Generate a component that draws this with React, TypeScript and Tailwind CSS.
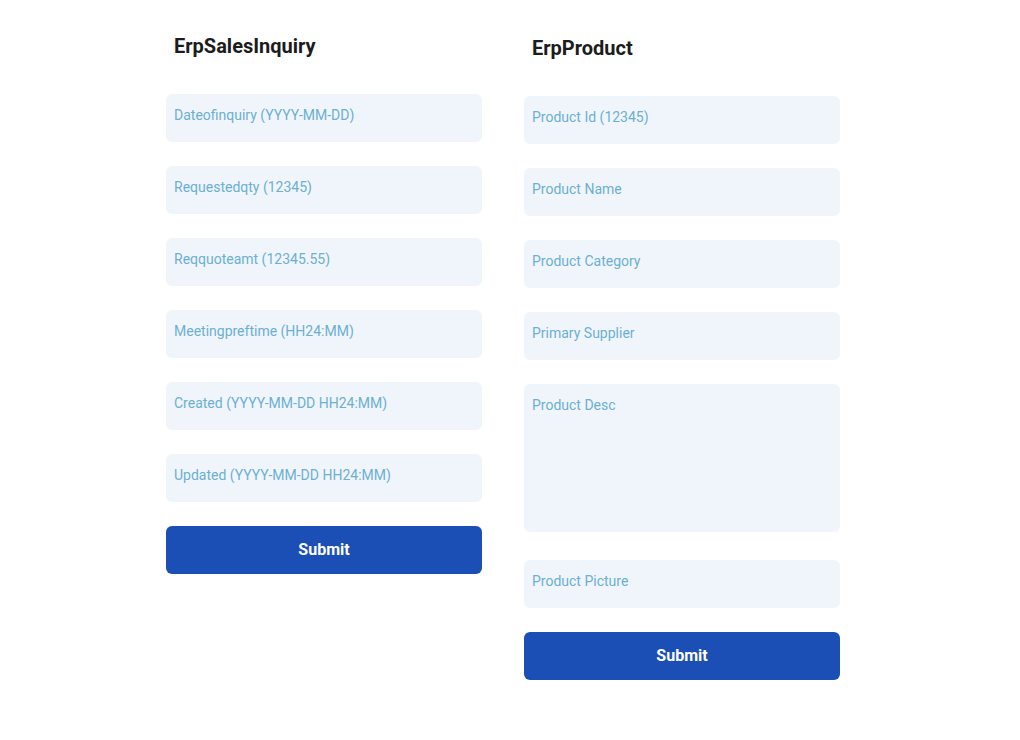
import React from 'react';

const salesFields = [
  'Dateofinquiry (YYYY-MM-DD)',
  'Requestedqty (12345)',
  'Reqquoteamt (12345.55)',
  'Meetingpreftime (HH24:MM)',
  'Created (YYYY-MM-DD HH24:MM)',
  'Updated (YYYY-MM-DD HH24:MM)',
];

const inputClass =
  'block w-full h-12 rounded-md bg-[#f0f5fc] px-2 pt-2 pb-[14px] text-sm leading-4 text-[#1c1c1c] placeholder:text-[#6cb0d2] outline-none';

const SubmitButton: React.FC = () => (
  <button className="w-full h-12 rounded-md bg-[#1b4fb5] text-base font-bold text-white">
    Submit
  </button>
);

const App: React.FC = () => {
  return (
    <div className="min-h-[740px] bg-white pt-8 font-['Roboto',sans-serif]">
      <div className="ml-[166px] flex gap-[42px]">
        {/* Sales inquiry form */}
        <div className="w-[316px]">
          <h2 className="px-2 text-xl font-bold leading-7 text-[#1c1c1c]">ErpSalesInquiry</h2>
          <div className="mt-[34px] flex flex-col gap-6">
            {salesFields.map((f) => (
              <input key={f} className={inputClass} placeholder={f} />
            ))}
            <SubmitButton />
          </div>
        </div>

        {/* Product form */}
        <div className="mt-[2px] w-[316px]">
          <h2 className="px-2 text-xl font-bold leading-7 text-[#1c1c1c]">ErpProduct</h2>
          <div className="mt-[34px] flex flex-col gap-6">
            <input className={inputClass} placeholder="Product Id (12345)" />
            <input className={inputClass} placeholder="Product Name" />
            <input className={inputClass} placeholder="Product Category" />
            <input className={inputClass} placeholder="Primary Supplier" />
            <textarea
              className="block h-[148px] w-full resize-none rounded-md bg-[#f0f5fc] px-2 pt-[13px] text-sm leading-4 text-[#1c1c1c] placeholder:text-[#6cb0d2] outline-none"
              placeholder="Product Desc"
            />
            <input className={`${inputClass} mt-[4px]`} placeholder="Product Picture" />
            <SubmitButton />
          </div>
        </div>
      </div>
    </div>
  );
};

export default App;
